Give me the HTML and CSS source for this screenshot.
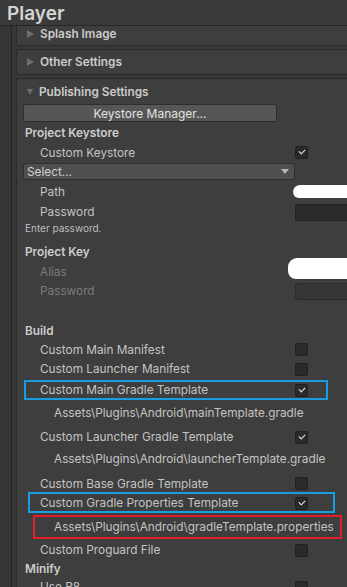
FILE: index.html
```html
<!DOCTYPE html>
<html lang="en">
<head>
    <meta charset="UTF-8">
    <meta name="viewport" content="width=device-width, initial-scale=1.0">
    <title>Player Settings</title>
    <link rel="stylesheet" href="styles.css">
</head>
<body>

    <div class="header">Player</div>

    <div class="inspector">
        <div class="rail"></div>
        <div class="sections">

            <div class="section section-cut">
                <div class="foldout"><span class="arrow"></span>Splash Image</div>
            </div>

            <div class="section">
                <div class="foldout foldout-tall"><span class="arrow"></span>Other Settings</div>
            </div>

            <div class="section section-open">
                <div class="foldout foldout-tall"><span class="arrow arrow-down"></span>Publishing Settings</div>
                <div class="section-body">
                    <button class="btn">Keystore Manager...</button>

                    <div class="row heading">Project Keystore</div>
                    <div class="row field h19">
                        <span class="label">Custom Keystore</span>
                        <span class="check on"></span>
                    </div>
                    <div class="select">
                        <span>Select...</span>
                        <span class="select-arrow"></span>
                    </div>
                    <div class="row field mt2">
                        <span class="label">Path</span>
                        <span class="blob blob-path"></span>
                    </div>
                    <div class="row field">
                        <span class="label">Password</span>
                        <span class="input"></span>
                    </div>
                    <div class="hint">Enter password.</div>

                    <div class="row heading mt7">Project Key</div>
                    <div class="row field disabled h19">
                        <span class="label">Alias</span>
                        <span class="blob blob-alias"></span>
                    </div>
                    <div class="row field disabled">
                        <span class="label">Password</span>
                        <span class="input input-off"></span>
                    </div>

                    <div class="row heading mt20 h19">Build</div>
                    <div class="row field h19">
                        <span class="label">Custom Main Manifest</span>
                        <span class="check"></span>
                    </div>
                    <div class="row field">
                        <span class="label">Custom Launcher Manifest</span>
                        <span class="check"></span>
                    </div>
                    <div class="row field mt1 mark-main">
                        <span class="label">Custom Main Gradle Template</span>
                        <span class="check on"></span>
                    </div>
                    <div class="row path mt3">Assets\Plugins\Android\mainTemplate.gradle</div>
                    <div class="row field mt4">
                        <span class="label">Custom Launcher Gradle Template</span>
                        <span class="check on"></span>
                    </div>
                    <div class="row path mt2">Assets\Plugins\Android\launcherTemplate.gradle</div>
                    <div class="row field mt5 h19">
                        <span class="label">Custom Base Gradle Template</span>
                        <span class="check"></span>
                    </div>
                    <div class="row field mark-props">
                        <span class="label">Custom Gradle Properties Template</span>
                        <span class="check on"></span>
                    </div>
                    <div class="row path path-tall mt2 mark-path">Assets\Plugins\Android\gradleTemplate.properties</div>
                    <div class="row field mt1">
                        <span class="label">Custom Proguard File</span>
                        <span class="check"></span>
                    </div>
                    <div class="row heading h17">Minify</div>
                    <div class="row field">
                        <span class="label">Use R8</span>
                        <span class="check"></span>
                    </div>
                </div>
            </div>

        </div>
    </div>

</body>
</html>
```

FILE: styles.css
```css
body {
    margin: 0;
    width: 347px;
    height: 587px;
    overflow: hidden;
    background: #383838;
    font-family: Inter, "Noto Sans", sans-serif;
    font-size: 11.8px;
    color: #c4c4c4;
}
.header {
    height: 23px;
    padding-top: 2px;
    padding-left: 7px;
    line-height: 23px;
    font-size: 19px;
    font-weight: 600;
    color: #d4d4d4;
    background: #3b3b3b;
    border-bottom: 1px solid #262626;
}
.inspector {
    display: flex;
    height: 561px;
}
.rail {
    width: 11px;
    flex: none;
    background: #353535;
    border-right: 1px solid #242424;
}
.sections {
    flex: 1;
    margin-left: 4px;
}
.section {
    background: #3e3e3e;
    border: 1px solid #2b2b2b;
    border-right: none;
    border-radius: 3px 0 0 3px;
    margin-bottom: 3px;
}
.section-cut {
    border-top: none;
    border-radius: 0 0 0 3px;
}
.section-open {
    border-bottom: none;
    margin-bottom: 0;
    height: 600px;
}
.foldout {
    display: flex;
    align-items: center;
    height: 16px;
    padding-bottom: 3px;
    padding-left: 10px;
    font-weight: 600;
    color: #cbcbcb;
}
.foldout-tall {
    height: 24px;
    padding-bottom: 0;
}
.section-open .foldout {
    height: 25px;
}
.arrow {
    width: 0;
    height: 0;
    margin-right: 6px;
    border-top: 4px solid transparent;
    border-bottom: 4px solid transparent;
    border-left: 7px solid #6f6f6f;
}
.arrow-down {
    border-left: 3.5px solid transparent;
    border-right: 3.5px solid transparent;
    border-top: 6px solid #6f6f6f;
    border-bottom: none;
}
.section-body {
    padding-left: 6px;
}
.btn {
    display: block;
    width: 254px;
    height: 18px;
    padding: 0;
    margin-bottom: 1px;
    background: #565656;
    border: 1px solid #2e2e2e;
    border-radius: 3px;
    font-family: inherit;
    font-size: 12px;
    color: #e2e2e2;
}
.row {
    position: relative;
    height: 20px;
    display: grid;
    grid-template-columns: 272px 1fr;
    align-items: center;
}
.h19 { height: 19px; }
.h17 { height: 17px; }
.mt1 { margin-top: 1px; }
.mt2 { margin-top: 2px; }
.mt3 { margin-top: 3px; }
.mt4 { margin-top: 4px; }
.mt5 { margin-top: 5px; }
.mt7 { margin-top: 7px; }
.mt20 { margin-top: 20px; }
.heading {
    padding-left: 2px;
    font-weight: 600;
    color: #cdcdcd;
}
.field .label {
    padding-left: 17px;
}
.disabled .label {
    color: #7b7b7b;
}
.path {
    display: block;
    line-height: 20px;
    padding-left: 31px;
    white-space: nowrap;
}
.path-tall {
    height: 24px;
    line-height: 24px;
}
.check {
    display: block;
    width: 11px;
    height: 11px;
    background: #2a2a2a;
    border: 1px solid #202020;
    border-radius: 2px;
    position: relative;
}
.check.on::after {
    content: "";
    position: absolute;
    left: 3px;
    top: 2px;
    width: 5px;
    height: 3px;
    border-left: 1.5px solid #e6e6e6;
    border-bottom: 1.5px solid #e6e6e6;
    transform: rotate(-45deg);
}
.select {
    margin-top: 1px;
    width: 267px;
    height: 15px;
    display: flex;
    align-items: center;
    justify-content: space-between;
    padding: 0 0 0 3px;
    background: #4f4f4f;
    border: 1px solid #2e2e2e;
    border-radius: 3px;
    color: #d2d2d2;
}
.select-arrow {
    width: 0;
    height: 0;
    margin-right: 5px;
    border-left: 4px solid transparent;
    border-right: 4px solid transparent;
    border-top: 5px solid #b4b4b4;
}
.input {
    display: block;
    height: 15px;
    background: #2a2a2a;
    border: 1px solid #212121;
    border-right: none;
    border-radius: 3px 0 0 3px;
}
.input-off {
    background: #363636;
    border-color: #2c2c2c;
}
.hint {
    height: 13px;
    line-height: 13px;
    padding-left: 2px;
    font-size: 10px;
    color: #bdbdbd;
}
.blob {
    position: absolute;
    background: #ffffff;
}
.blob-path {
    left: 270px;
    top: 3px;
    width: 60px;
    height: 13px;
    border-radius: 7px 2px 2px 6px;
}
.blob-alias {
    left: 265px;
    top: -4px;
    width: 65px;
    height: 21px;
    border-radius: 9px 3px 3px 8px;
}
.mark-main::after,
.mark-props::after,
.mark-path::after {
    content: "";
    position: absolute;
    box-sizing: border-box;
    border: 2px solid #1a9ce0;
}
.mark-main::after {
    left: 1px;
    top: 0;
    width: 304px;
    height: 20px;
}
.mark-props::after {
    left: 5px;
    top: -1px;
    width: 307px;
    height: 21px;
}
.mark-path::after {
    left: 10px;
    top: 0;
    width: 309px;
    height: 24px;
    border-color: #e11f2b;
}
```
